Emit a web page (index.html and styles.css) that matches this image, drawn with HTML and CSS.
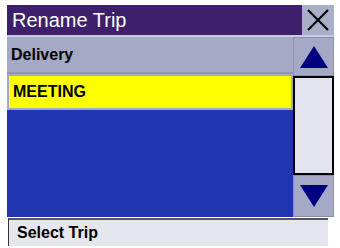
FILE: index.html
```html
<!DOCTYPE html>
<html>
<head>
<meta charset="utf-8">
<link rel="stylesheet" href="styles.css">
</head>
<body>
<div class="screen">
  <div class="header">
    <div class="title">Rename Trip</div>
    <div class="close">
      <svg width="24" height="24" viewBox="0 0 24 24"><path d="M2 2 L22 22 M22 2 L2 22" stroke="#000" stroke-width="2" fill="none"/></svg>
    </div>
  </div>
  <div class="main">
    <div class="list">
      <div class="row header-row">Delivery</div>
      <div class="row selected">MEETING</div>
      <div class="fill"></div>
    </div>
    <div class="scroll">
      <div class="btn up">
        <svg width="30" height="24" viewBox="0 0 30 24"><polygon points="15,1 29,23 1,23" fill="#000080"/></svg>
      </div>
      <div class="track"></div>
      <div class="btn down">
        <svg width="30" height="24" viewBox="0 0 30 24"><polygon points="1,1 29,1 15,23" fill="#000080"/></svg>
      </div>
    </div>
  </div>
  <div class="status">Select Trip</div>
</div>
</body>
</html>
```
FILE: styles.css
```css
html, body {
  margin: 0;
  padding: 0;
  background: #ffffff;
}
body {
  font-family: "Liberation Sans", Arial, sans-serif;
  width: 340px;
  height: 248px;
  overflow: hidden;
}
.screen {
  margin: 5px 0 0 7px;
  width: 327px;
  display: flex;
  flex-direction: column;
}
.header {
  display: flex;
  height: 30px;
  border-bottom: 2px solid #c8cce0;
}
.title {
  flex: 1;
  background: #3d1f6c;
  color: #ffffff;
  font-size: 20px;
  line-height: 30px;
  padding-left: 5px;
}
.close {
  width: 32px;
  background: #a9aec9;
  display: flex;
  align-items: center;
  justify-content: center;
}
.main {
  display: flex;
  height: 180px;
}
.list {
  flex: 1;
  display: flex;
  flex-direction: column;
  background: #2135b0;
}
.row {
  font-weight: bold;
  font-size: 16px;
  color: #000;
  display: flex;
  align-items: center;
}
.header-row {
  height: 35px;
  background: #a4a9c6;
  padding-left: 4px;
  border-bottom: 2px solid #9096b4;
}
.selected {
  height: 32px;
  background: #ffff00;
  border: 2px solid #a4a9c6;
  padding-left: 4px;
}
.fill {
  flex: 1;
  background: #2135b0;
}
.scroll {
  width: 41px;
  display: flex;
  flex-direction: column;
}
.btn {
  background: #a4a9c6;
  border: 1px solid #8a90ae;
  display: flex;
  align-items: center;
  justify-content: center;
}
.up {
  height: 37px;
}
.down {
  height: 40px;
}
.track {
  flex: 1;
  background: #e4e4ee;
  border: 2px solid #000;
}
.status {
  margin-top: 1px;
  height: 28px;
  width: 320px;
  margin-left: 1px;
  background: #e6e6ee;
  border-left: 1px solid #333;
  border-top: 2px solid #556;
  font-weight: bold;
  font-size: 16px;
  line-height: 26px;
  padding-left: 8px;
  box-sizing: border-box;
}
```
